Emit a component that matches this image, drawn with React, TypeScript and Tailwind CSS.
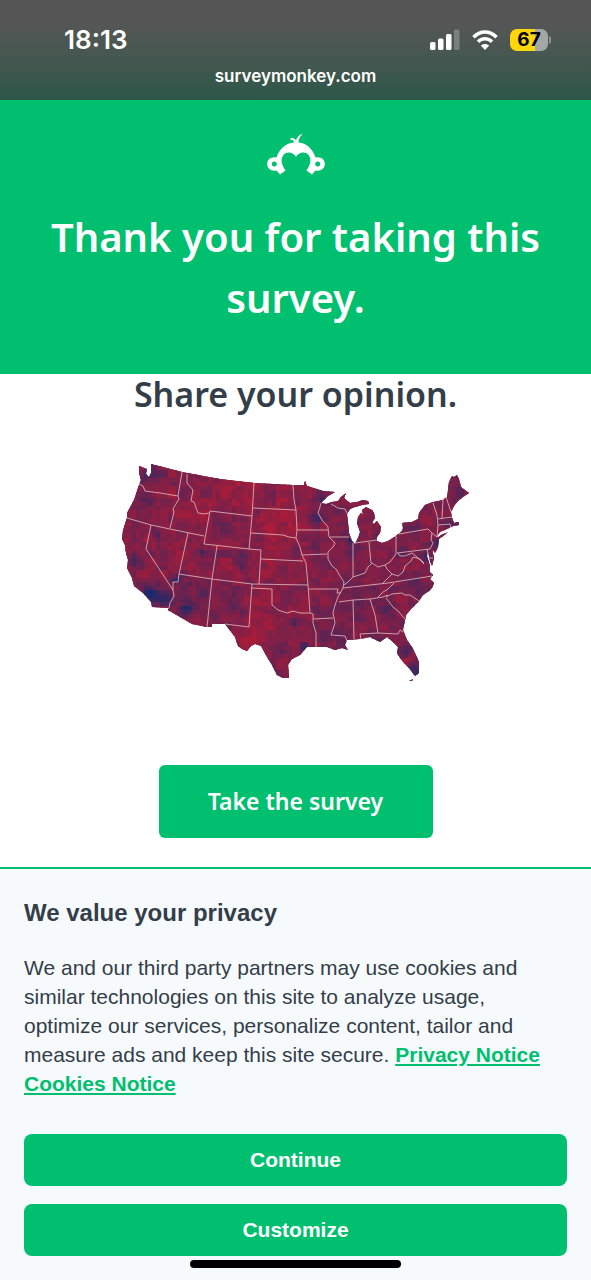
import type { ReactNode } from "react";

const COUNTRY =
  "M151 464L182 472L220 479L254 483L293 485L304 485L305 481L307 486L317 489L323 491L335 492L328 496L321 503L326 504L332 502L338 501L341 497L346 493L344 498L350 503L357 502L363 500L368 501L369 504L362 505L355 507L350 509L347 514L348 522L349 533L352 541L355 544L358 538L360 532L357 523L358 517L361 513L363 515L362 510L366 507L372 510L374 513L375 518L372 523L374 524L377 521L381 527L380 533L377 537L377 541L382 543L388 541L396 536L402 531L403 528L402 523L412 522L418 519L419 513L425 505L433 502L443 500L447 497L448 490L449 482L452 476L454 477L457 475L459 479L461 487L465 490L469 493L463 497L458 501L454 506L451 512L452 518L454 523L459 522L459 525L453 526L447 529L440 532L437 536L439 540L438 547L435 553L432 549L434 558L432 566L430 561L428 551L427 556L430 566L430 572L433 575L430 579L434 583L432 588L429 591L423 595L419 601L412 608L406 615L405 620L403 630L407 640L412 647L415 653L419 662L419 673L415 676L409 668L405 664L400 658L397 653L398 647L393 642L387 637L380 642L370 637L360 639L347 640L345 645L348 650L342 648L335 650L327 647L320 647L315 647L307 647L300 655L292 659L288 665L289 678L283 678L277 675L272 665L267 657L261 646L255 644L251 646L247 651L242 649L238 646L235 637L225 624L212 624L212 627L207 627L192 624L168 610L169 608L152 607L151 602L143 593L134 586L132 578L127 568L128 560L126 553L125 545L122 539L123 530L127 518L127 513L134 500L139 485L141 480L139 473L139 466L147 469L146 474L149 477L151 473Z";

const BORDERS = [
  "M139 484L143 486L145 491L160 493L178 496",
  "M182 472L178 496L179 499L173 509L174 512L170 528",
  "M127 518L151 525L170 529L204 536",
  "M187 474L187 483L193 490L191 501L194 502L198 513L204 514L209 513",
  "M254 483L252 516L210 511L204 544L249 549L252 516",
  "M253 508L296 510",
  "M251 533L283 535L289 537L296 538",
  "M249 549L261 550L259 584",
  "M261 559L303 561",
  "M188 533L179 574L178 582L173 582L173 590L174 596L170 603L169 608",
  "M151 525L146 549L173 590",
  "M217 546L212 579L207 627",
  "M179 574L212 579L252 584L308 585",
  "M252 584L249 627L225 624",
  "M252 588L272 589L272 605L278 610L287 613L293 611L300 613L310 613L308 585",
  "M310 613L313 614L313 623L316 633L316 647",
  "M313 619L333 618",
  "M309 589L338 589L337 593L341 593",
  "M293 485L294 500L296 510L297 530L296 538L300 547L302 555L306 563L308 585",
  "M297 530L328 530",
  "M302 555L327 554",
  "M321 503L320 507L318 513L322 520L328 527L329 537L335 543L333 547L328 552L328 559L332 566L336 569L340 576L344 582L343 588L338 597L335 605L333 613L335 623L331 635L345 636L347 641",
  "M330 537L349 537",
  "M331 504L338 508L345 509L347 513",
  "M353 543L353 570L353 577",
  "M355 543L377 540",
  "M369 542L371 563",
  "M344 585L348 582L353 577L359 575L365 573L368 567L372 563L378 567L385 565L390 562L396 554L396 536",
  "M397 553L430 549L433 543L431 540L432 533L428 529L399 534",
  "M432 533L437 537L438 525L437 515L433 503",
  "M438 519L452 517",
  "M438 525L450 524L451 528",
  "M443 500L442 518",
  "M446 497L451 512",
  "M343 588L388 583L432 576",
  "M339 602L353 600L370 599L383 597L388 595",
  "M394 583L388 589L383 592L378 597",
  "M386 597L392 594L402 593L405 595L410 595L419 601",
  "M386 598L393 607L399 612L405 619",
  "M370 599L375 615L378 633L360 634L361 639",
  "M353 600L354 639",
  "M378 633L398 634L400 630L403 632",
  "M383 583L392 574L387 569L385 565",
  "M392 574L398 576L403 572L405 566L411 561L413 557L420 559L424 563",
  "M398 553L400 556L405 556L412 553L417 557L424 564",
  "M427 549L429 558L433 558",
];

// x, y, radius, strength: positive leans red, negative leans blue
const LEANS = [
  [154, 594, 12, -0.4], [164, 596, 9, -0.35], [147, 591, 5, -0.6], [132, 558, 7, -0.35],
  [148, 475, 9, -0.3], [145, 500, 8, -0.2], [153, 533, 4, -0.35], [185, 607, 7, -0.5],
  [175, 577, 5, -0.4], [192, 592, 16, -0.15], [230, 600, 16, -0.15], [243, 555, 7, -0.3],
  [240, 566, 4, -0.3], [199, 549, 4, -0.35], [218, 526, 14, -0.15], [292, 620, 5, -0.5],
  [303, 646, 5, -0.6], [281, 650, 4, -0.4], [318, 494, 6, -0.3], [314, 517, 6, -0.3],
  [349, 539, 4, -0.5], [350, 550, 6, -0.2], [376, 534, 4, -0.3], [340, 578, 4, -0.25],
  [362, 605, 10, -0.15], [388, 607, 5, -0.25], [415, 670, 6, -0.4], [405, 650, 5, -0.3],
  [436, 541, 5, -0.4], [447, 521, 7, -0.35], [425, 555, 5, -0.35], [415, 585, 8, -0.15],
  [341, 645, 6, -0.2], [235, 490, 22, 0.15], [275, 520, 20, 0.15], [270, 556, 20, 0.15],
  [263, 600, 16, 0.15], [260, 630, 14, 0.12], [195, 514, 14, 0.12], [165, 512, 14, 0.08],
  [170, 555, 14, 0.1], [225, 570, 8, 0.15], [247, 642, 10, 0.18], [427, 515, 9, 0.1],
  [408, 658, 4, 0.25], [285, 672, 5, 0.15],
];

function noise(a: number, b: number) {
  const n = Math.sin(a * 127.1 + b * 311.7) * 43758.5453;
  return n - Math.floor(n);
}

function countyColor(x: number, y: number) {
  let t = x < 310 ? 0.7 : 0.63;
  t += (noise(Math.floor(x / 5), Math.floor(y / 5)) - 0.5) * 0.22;
  t += (noise(Math.floor(x / 11), Math.floor(y / 9)) - 0.5) * 0.2;
  for (const [lx, ly, r, s] of LEANS) {
    const d = ((x - lx) ** 2 + (y - ly) ** 2) / (r * r);
    t += s * Math.exp(-d);
  }
  t = Math.max(0, Math.min(1, t));
  const from = [22, 42, 108];
  const to = [176, 27, 54];
  const [r, g, b] = from.map((c, i) => Math.round(c + (to[i] - c) * t));
  return `rgb(${r},${g},${b})`;
}

function ElectionMap() {
  const cells: ReactNode[] = [];
  for (let y = 462; y < 682; y += 4) {
    for (let x = 120; x < 472; x += 4) {
      const w = 4 + Math.round(noise(x, y) * 3);
      cells.push(<rect key={`${x}-${y}`} x={x} y={y} width={w} height={5} fill={countyColor(x, y)} />);
    }
  }
  return (
    <svg viewBox="120 462 352 221" className="w-[352px] max-w-full" role="img" aria-label="Map of the United States">
      <defs>
        <clipPath id="country">
          <path d={COUNTRY} />
          <path d="M437 538L441 535L448 532L442 537L437 540Z" />
          <path d="M409 681L413 679L412 681Z" />
        </clipPath>
      </defs>
      <g clipPath="url(#country)">
        <rect x="120" y="462" width="352" height="221" fill="#7c2147" />
        {cells}
      </g>
      <path d={BORDERS.join("")} fill="none" stroke="#e6bcc0" strokeWidth="0.8" strokeLinejoin="round" />
    </svg>
  );
}

function MonkeyLogo() {
  return (
    <svg viewBox="0 0 58 42" className="h-[42px] w-[58px]" role="img" aria-label="SurveyMonkey">
      <path
        fill="#fff"
        d="M9.500 23.500C12 15 19 9 27 8.500C27 6.500 25.500 5.500 23 5.500C23 4.500 24 4 25 4C27 4 28.500 5 29 6.500C29.500 4 31.500 1.500 34.500 0L35 1C32.500 3 31.500 5.500 31.500 8.500C39.500 9 46 15 48.500 23.500C54 22.500 57.800 25.500 57.800 30C57.800 34.500 54 37.500 48.500 36.500L45 40.500L39.500 36.500C43 31 44.500 27 42.500 22.500C40 17 32 17 29 23C26 17 18 17 15.500 22.500C13.500 27 15 31 18.500 36.500L13 40.500L9.500 36.500C4 37.500 0.200 34.500 0.200 30C0.200 25.500 4 22.500 9.500 23.500Z"
      />
      <circle cx="7.300" cy="30" r="2.500" fill="#00bf6f" />
      <circle cx="50.700" cy="30" r="2.500" fill="#00bf6f" />
    </svg>
  );
}

function StatusIcons() {
  return (
    <div className="flex items-center gap-3">
      <svg viewBox="0 0 30 22" className="h-[22px] w-[30px]" fill="#fff" aria-hidden="true">
        <rect x="0" y="13" width="5.500" height="8" rx="1.500" />
        <rect x="8" y="9.500" width="5.500" height="11.500" rx="1.500" />
        <rect x="16" y="5" width="5.500" height="16" rx="1.500" />
        <rect x="24" y="0.500" width="5.500" height="20.500" rx="1.500" opacity="0.25" />
      </svg>
      <svg viewBox="0 0 26 22" className="h-[22px] w-[26px]" fill="none" stroke="#fff" strokeWidth="3.600" aria-hidden="true">
        <path d="M1.500 8.300C8 1.300 18 1.300 24.500 8.300" />
        <path d="M6 12.800C10 8.800 16 8.800 20 12.800" />
        <path d="M13 21L8.800 16.600C11.200 14.300 14.800 14.300 17.200 16.600Z" fill="#fff" stroke="none" />
      </svg>
      <div className="flex items-center gap-px">
        <div className="flex h-[22px] w-[38px] items-center justify-center rounded-[7px] bg-[linear-gradient(90deg,#ffd60a_67%,#a3a8a6_67%)] font-[Inter,sans-serif] text-[19px] leading-5 font-bold text-black">
          67
        </div>
        <div className="h-2 w-0.5 rounded-r-full bg-[#8b9391]" />
      </div>
    </div>
  );
}

function ConsentButton({ children }: { children: ReactNode }) {
  return (
    <button type="button" className="h-[52px] w-full rounded-lg bg-[#00bf6f] text-[21px] font-bold text-white">
      {children}
    </button>
  );
}

export default function App() {
  return (
    <div className="flex min-h-screen flex-col bg-white text-[#333e48]">
      <div className="h-[100px] bg-linear-to-b from-[#565656] from-20% to-[#2d5749] font-[Inter,sans-serif] text-white">
        <div className="flex items-center justify-between pt-6 pr-10 pl-16">
          <span className="text-[26px] leading-8 font-semibold">18:13</span>
          <StatusIcons />
        </div>
        <p className="mt-2 text-center text-[17px] leading-6 font-semibold">surveymonkey.com</p>
      </div>

      <header className="flex flex-col items-center bg-[#00bf6f] px-6 pt-[34px] pb-[46px]">
        <MonkeyLogo />
        <h1 className="mt-[30px] text-center font-['Noto_Sans',sans-serif] text-[40px] leading-[61px] font-semibold text-white">
          Thank you for taking this survey.
        </h1>
      </header>

      <main className="flex grow flex-col items-center px-6 pb-[29px]">
        <h2 className="text-center font-['Noto_Sans',sans-serif] text-[34px] leading-10 font-semibold">Share your opinion.</h2>
        <div className="mt-12 flex justify-center">
          <ElectionMap />
        </div>
        <button
          type="button"
          className="mt-auto h-[73px] w-[274px] rounded-md bg-[#00bf6f] font-['Noto_Sans',sans-serif] text-[23px] font-semibold text-white"
        >
          Take the survey
        </button>
      </main>

      <section className="border-t-2 border-[#00bf6f] bg-[#f7fafd] px-6 pt-7 pb-3 font-['Liberation_Sans',sans-serif]">
        <h3 className="text-2xl leading-8 font-bold">We value your privacy</h3>
        <p className="mt-6 text-[21px] leading-[29px]">
          We and our third party partners may use cookies and similar technologies on this site to analyze usage, optimize our
          services, personalize content, tailor and measure ads and keep this site secure.{" "}
          <a href="#privacy" className="font-bold text-[#00bf6f] underline">
            Privacy Notice
          </a>{" "}
          <a href="#cookies" className="font-bold text-[#00bf6f] underline">
            Cookies Notice
          </a>
        </p>
        <div className="mt-9 flex flex-col gap-[18px]">
          <ConsentButton>Continue</ConsentButton>
          <ConsentButton>Customize</ConsentButton>
        </div>
        <div className="mx-auto mt-1 h-2 w-[211px] rounded-full bg-black" />
      </section>
    </div>
  );
}
